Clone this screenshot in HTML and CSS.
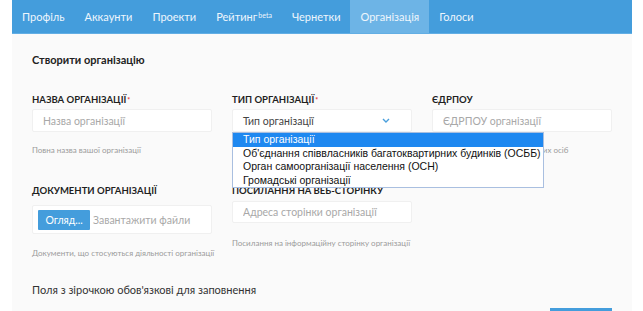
FILE: index.html
```html
<!DOCTYPE html>
<html lang="uk">
<head>
    <meta charset="UTF-8">
    <meta name="viewport" content="width=device-width, initial-scale=1.0">
    <title>Створити організацію</title>
    <link rel="stylesheet" href="styles.css">
</head>
<body>

<div class="page">
    <nav class="tabs">
        <a class="tab" href="#">Профіль</a>
        <a class="tab" href="#">Аккаунти</a>
        <a class="tab" href="#">Проекти</a>
        <a class="tab" href="#">Рейтинг<sup>beta</sup></a>
        <a class="tab" href="#">Чернетки</a>
        <a class="tab active" href="#">Організація</a>
        <a class="tab" href="#">Голоси</a>
    </nav>

    <div class="panel">
        <h3 class="title">Створити організацію</h3>

        <div class="form-grid">
            <div class="field">
                <label class="label">Назва організації<span class="req">*</span></label>
                <input class="input" type="text" placeholder="Назва організації">
                <div class="help">Повна назва вашої організації</div>
            </div>

            <div class="field select-field">
                <label class="label">Тип організації<span class="req">*</span></label>
                <div class="input select">
                    <span>Тип організації</span>
                    <svg class="chevron" width="8" height="5" viewBox="0 0 8 5">
                        <path d="M1 1 L4 4 L7 1" fill="none" stroke="#4a9fdc" stroke-width="1.4"/>
                    </svg>
                </div>
                <ul class="options">
                    <li class="selected">Тип організації</li>
                    <li>Об'єднання співвласників багатоквартирних будинків (ОСББ)</li>
                    <li>Орган самоорганізації населення (ОСН)</li>
                    <li>Громадські організації</li>
                </ul>
            </div>

            <div class="field">
                <label class="label">ЄДРПОУ</label>
                <input class="input" type="text" placeholder="ЄДРПОУ організації">
                <div class="help">Код за ЄДРПОУ для юридичних осіб</div>
            </div>

            <div class="field">
                <label class="label">Документи організації</label>
                <div class="input file">
                    <button class="browse">Огляд...</button>
                    <span class="file-text">Завантажити файли</span>
                </div>
                <div class="help help-file">Документи, що стосуються діяльності організації</div>
            </div>

            <div class="field">
                <label class="label">Посилання на веб-сторінку</label>
                <input class="input url" type="text" placeholder="Адреса сторінки організації">
                <div class="help help-url">Посилання на інформаційну сторінку організації</div>
            </div>
        </div>

        <p class="note">Поля з зірочкою обов'язкові для заповнення</p>

        <div class="actions">
            <button class="submit">Створити</button>
        </div>
    </div>
</div>

</body>
</html>
```

FILE: styles.css
```css
body {
    margin: 0;
    background-color: #fff;
    font-family: Lato, "Open Sans", sans-serif;
}
.page {
    margin: 0 11px 0 12px;
}
.tabs {
    display: flex;
    height: 33px;
    background-color: #449ddc;
    border-bottom: 1px solid #62aee4;
}
.tab {
    display: flex;
    align-items: center;
    padding: 0 10px;
    color: #eef6fc;
    font-size: 11px;
    text-decoration: none;
}
.tab sup {
    font-size: 7px;
    margin-left: 1px;
    position: relative;
    top: -2px;
}
.tab.active {
    background-color: #6db4e6;
}
.panel {
    background-color: #fafafa;
    padding: 19px 20px 0 20px;
    height: 300px;
    overflow: hidden;
}
.title {
    margin: 0;
    font-size: 11px;
    line-height: 14px;
    font-weight: bold;
    color: #222;
}
.form-grid {
    display: grid;
    grid-template-columns: 180px 180px 180px;
    column-gap: 20px;
    row-gap: 30px;
    align-items: start;
    margin-top: 27px;
}
.field {
    display: flex;
    flex-direction: column;
    position: relative;
}
.label {
    font-size: 9.5px;
    line-height: 12px;
    font-weight: bold;
    text-transform: uppercase;
    color: #1f1f1f;
}
.req {
    color: #e4393c;
    font-size: 7px;
    vertical-align: top;
    margin-left: 1px;
}
.input {
    box-sizing: border-box;
    height: 23px;
    margin-top: 3px;
    padding: 0 10px;
    background-color: #fff;
    border: 1px solid #f0f0f0;
    border-radius: 2px;
    font-family: Lato, "Open Sans", sans-serif;
    font-size: 10.5px;
    color: #555;
    outline: none;
}
.input::placeholder {
    color: #a8a8a8;
}
.select {
    display: flex;
    align-items: center;
    justify-content: space-between;
    color: #444;
}
.chevron {
    margin-right: 11px;
}
.options {
    position: absolute;
    top: 38px;
    left: 0;
    width: 310px;
    margin: 0;
    padding: 0;
    list-style: none;
    background-color: #fff;
    border: 1px solid #a9bfe0;
    font-family: "Liberation Sans", Arial, sans-serif;
    font-size: 10.5px;
    color: #111;
    z-index: 2;
}
.options li {
    height: 13.5px;
    line-height: 13.5px;
    padding-left: 10px;
    white-space: nowrap;
}
.options li.selected {
    background-color: #1e88f0;
    color: #fff;
}
.help {
    margin-top: 13px;
    font-size: 8px;
    line-height: 10px;
    color: #9a9a9a;
    white-space: nowrap;
}
.file {
    display: flex;
    align-items: center;
    height: 29px;
    margin-top: 8px;
    padding: 0 5px;
}
.browse {
    width: 52px;
    height: 20px;
    padding: 0;
    border: none;
    border-radius: 1px;
    background-color: #449ddc;
    color: #fff;
    font-family: Lato, "Open Sans", sans-serif;
    font-size: 10.5px;
}
.file-text {
    margin-left: 3px;
    color: #a8a8a8;
}
.help-file {
    margin-top: 14px;
}
.url {
    height: 22px;
    margin-top: 4px;
}
.help-url {
    margin-top: 15px;
}
.note {
    margin: 24px 0 0 0;
    font-size: 11px;
    line-height: 16px;
    color: #333;
}
.actions {
    display: flex;
    justify-content: flex-end;
    width: 580px;
    margin-top: 10px;
}
.submit {
    width: 62px;
    height: 26px;
    border: none;
    background-color: #449ddc;
    color: #fff;
}
```
